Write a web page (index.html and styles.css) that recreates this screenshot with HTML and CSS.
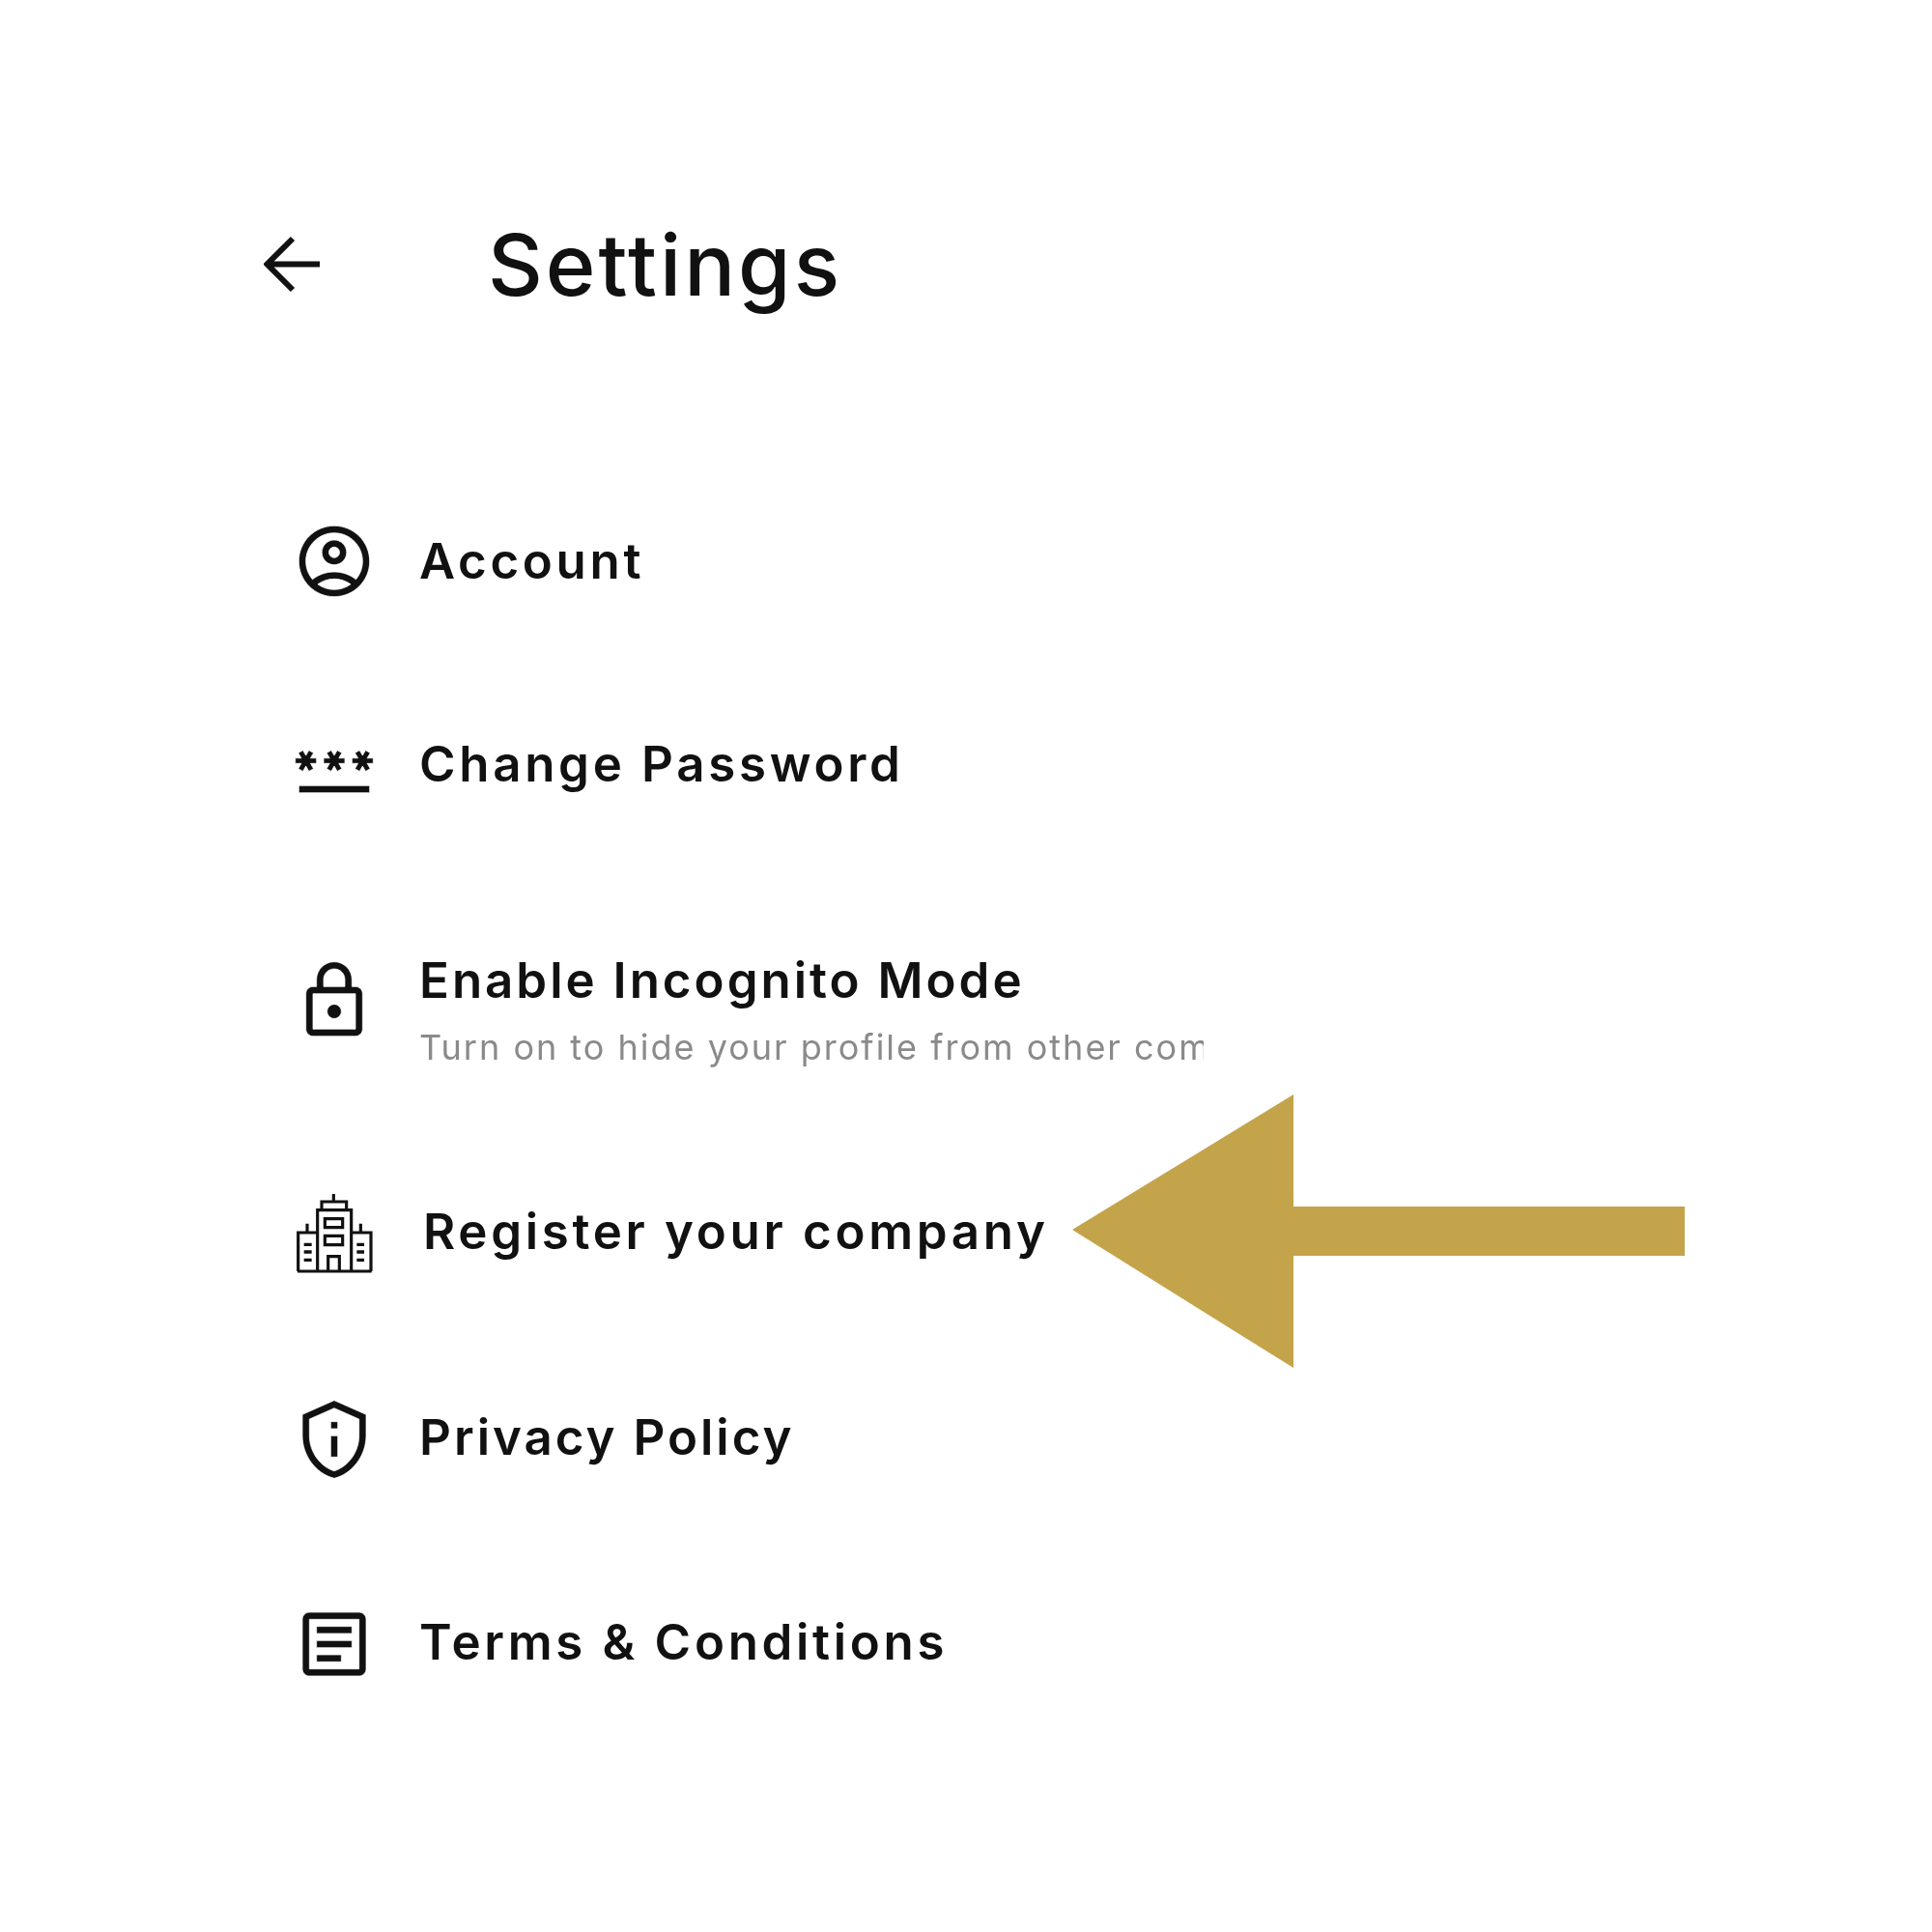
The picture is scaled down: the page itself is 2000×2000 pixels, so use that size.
FILE: index.html
```html
<!DOCTYPE html>
<html lang="en">
<head>
<meta charset="utf-8">
<title>Settings</title>
<link rel="stylesheet" href="styles.css">
</head>
<body>
<main class="page">
  <header class="header">
    <svg class="back" viewBox="0 0 60 60"><path d="M58 29.500H4M30 3 3.500 29.500 30 56"/></svg>
    <h1 class="title">Settings</h1>
  </header>
  <ul class="menu">
    <li class="row row-first">
      <svg class="icon" viewBox="0 0 24 24"><path d="M12 2C6.480 2 2 6.480 2 12s4.480 10 10 10 10-4.480 10-10S17.520 2 12 2zM7.350 18.500C8.660 17.560 10.260 17 12 17s3.340.56 4.650 1.500C15.340 19.440 13.740 20 12 20s-3.340-.56-4.650-1.500zm10.790-1.380C16.450 15.800 14.320 15 12 15s-4.450.8-6.140 2.120C4.700 15.730 4 13.950 4 12c0-4.420 3.580-8 8-8s8 3.580 8 8c0 1.950-.7 3.730-1.860 5.120zM12 6c-1.930 0-3.500 1.570-3.500 3.500S10.070 13 12 13s3.500-1.570 3.500-3.500S13.930 6 12 6zm0 5c-.83 0-1.500-.67-1.500-1.500S11.170 8 12 8s1.500.67 1.500 1.500S12.830 11 12 11z"/></svg>
      <span class="label">Account</span>
    </li>
    <li class="row">
      <svg class="icon" viewBox="0 0 24 24"><path d="M2 17h20v2H2v-2zM3.150 12.950 4 11.470l.85 1.480 1.300-.75-.85-1.480H7v-1.500H5.300l.85-1.470L4.850 7 4 8.470 3.150 7l-1.300.75.85 1.470H1v1.500h1.700l-.85 1.480 1.300.75zM9.850 12.200l1.300.75.85-1.480.85 1.480 1.300-.75-.85-1.480H15v-1.500h-1.700l.85-1.470L12.850 7 12 8.470 11.150 7l-1.300.75.85 1.470H9v1.500h1.700l-.85 1.480zM23 9.220h-1.700l.85-1.470L20.850 7 20 8.470 19.150 7l-1.300.75.85 1.470H17v1.500h1.700l-.85 1.480 1.300.75.85-1.480.85 1.480 1.300-.75-.85-1.480H23v-1.500z"/></svg>
      <span class="label label-raised">Change Password</span>
    </li>
    <li class="row row-tall">
      <svg class="icon" viewBox="0 0 24 24"><path d="M18 8h-1V6c0-2.760-2.240-5-5-5S7 3.240 7 6v2H6c-1.100 0-2 .9-2 2v10c0 1.100.9 2 2 2h12c1.100 0 2-.9 2-2V10c0-1.100-.9-2-2-2zM9 6c0-1.660 1.340-3 3-3s3 1.340 3 3v2H9V6zm9 14H6V10h12v10zm-6-3c1.100 0 2-.9 2-2s-.9-2-2-2-2 .9-2 2 .9 2 2 2z"/></svg>
      <div class="stack">
        <span class="label label-tight">Enable Incognito Mode</span>
        <span class="sub">Turn on to hide your profile from other community members</span>
      </div>
    </li>
    <li class="row row-company">
      <svg class="icon icon-line" viewBox="70 96 264 264">
        <path d="M90 348V228H150M150 348V158H255V348M255 228H316V348M88 348H318M163 158V132H240V158M200 132V108M118 228V200M284 228V200M173 185H228V212H173ZM173 238H228V266H173ZM183 348V302H218V348"/>
        <path class="dash" d="M108 265H132M108 288H132M108 313H132M272 265H295M272 288H295M272 313H295"/>
      </svg>
      <span class="label label-nudged">Register your company</span>
    </li>
    <li class="row">
      <svg class="icon" viewBox="0 0 24 24"><path d="M12 3.190l7 3.110V11c0 4.520-2.980 8.690-7 9.930-4.020-1.240-7-5.410-7-9.930V6.300l7-3.110M12 1 3 5v6c0 5.550 3.840 10.740 9 12 5.160-1.260 9-6.450 9-12V5l-9-4zm-1 6h2v2h-2zm0 4h2v6h-2z"/></svg>
      <span class="label label-tight label-lifted">Privacy Policy</span>
    </li>
    <li class="row row-last">
      <svg class="icon" viewBox="0 0 24 24"><path d="M19 5v14H5V5h14m0-2H5c-1.100 0-2 .9-2 2v14c0 1.100.9 2 2 2h14c1.100 0 2-.9 2-2V5c0-1.100-.9-2-2-2zM14 17H7v-2h7v2zm3-4H7v-2h10v2zm0-4H7V7h10v2z"/></svg>
      <span class="label label-lifted">Terms &amp; Conditions</span>
    </li>
  </ul>
  <svg class="pointer" viewBox="0 0 634 283"><path d="M0 140 229 0V116H634V167H229V283Z"/></svg>
</main>
</body>
</html>
```

FILE: styles.css
```css
* { box-sizing: border-box; }
html, body { margin: 0; background: #fff; }
.page {
  position: relative;
  width: 2000px;
  height: 2000px;
  padding: 230px 0 0 302px;
  font-family: Inter, "Noto Sans", sans-serif;
  color: #111;
}
.header { display: flex; align-items: center; height: 88px; filter: blur(0.7px); }
.back {
  width: 60px;
  height: 60px;
  margin-left: -29px;
  fill: none;
  stroke: #111;
  stroke-width: 6;
}
.title {
  margin: 0 0 0 172px;
  font-size: 88px;
  font-weight: 500;
  letter-spacing: 3px;
  line-height: 88px;
}
.menu { list-style: none; margin: 0; padding: 0; filter: blur(0.7px); }
.row { display: flex; align-items: center; height: 88px; margin-top: 126px; gap: 44px; }
.row-first { margin-top: 219px; }
.row-tall { margin-top: 153px; }
.row-company { margin-top: 152px; gap: 48px; }
.row-last { margin-top: 124px; }
.icon { flex: none; width: 88px; height: 88px; fill: #111; stroke: #fff; stroke-width: 0.2; }
.icon-line { fill: none; stroke: #111; stroke-width: 9.500; }
.dash { stroke-width: 10; }
.label { font-size: 51px; font-weight: 600; letter-spacing: 3.700px; line-height: 56px; white-space: nowrap; }
.label-tight { letter-spacing: 3px; }
.label-raised { margin-bottom: 8px; }
.label-lifted { margin-bottom: 5px; }
.label-nudged { margin-bottom: 3px; }
.stack { display: flex; flex-direction: column; margin-top: 20px; }
.sub {
  width: 812px;
  overflow: hidden;
  margin-top: 19px;
  font-size: 36px;
  line-height: 44px;
  letter-spacing: 2px;
  color: #8a8a8a;
  white-space: nowrap;
}
.pointer { position: absolute; left: 1110px; top: 1133px; width: 634px; height: 283px; fill: #c4a44a; }
```
